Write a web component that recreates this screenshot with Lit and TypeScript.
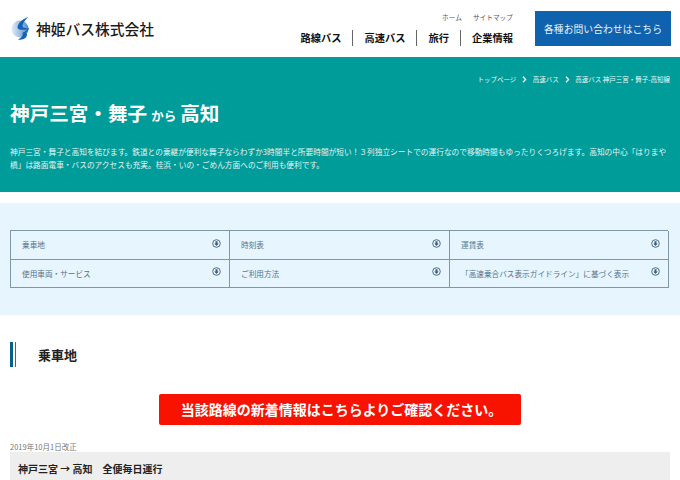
import { LitElement, html, css, svg } from "lit";
import { customElement } from "lit/decorators.js";

const items = [
  "乗車地", "時刻表", "運賃表",
  "使用車両・サービス", "ご利用方法", "「高速乗合バス表示ガイドライン」に基づく表示",
];

const downIcon = html`<svg class="ico" viewBox="0 0 9 9" width="9" height="9">
  <circle cx="4.5" cy="4.5" r="3.8" fill="none" stroke="#3d5f78" stroke-width="0.9"></circle>
  <path d="M3.5 2.2h2v2.2h1.2L4.5 6.9 2.3 4.4h1.2z" fill="#3d5f78"></path>
</svg>`;

const logo = svg`
  <defs>
    <linearGradient id="lg" x1="0" x2="1" y1="0" y2="0">
      <stop offset="0" stop-color="#e3ecf6"></stop>
      <stop offset="0.6" stop-color="#8fb4de"></stop>
      <stop offset="1" stop-color="#4f8ccc"></stop>
    </linearGradient>
  </defs>
  <circle cx="9" cy="13" r="8.500" fill="url(#lg)"></circle>
  <path d="M17.500 1 C12 2.500 7 7 6.500 11 C6.500 14 11 14.500 17 13.200 C14.500 15.500 12 16 11.500 17 C12.500 19 11 21.500 7 23.500 C12 24.500 16 22 16 18.500 C16 17.500 15.500 17 15 16.500 C16.500 15.500 17.500 14 18 12 C15 12.500 12 12 11.500 10.500 C11.500 7 14.500 3.500 17.500 1 Z" fill="#1464b4"></path>
`;

@customElement("app-root")
export class AppRoot extends LitElement {
  static styles = css`
    :host {
      display: block;
      width: 680px;
      height: 480px;
      overflow: hidden;
      background: #fff;
      font-family: "Noto Sans CJK JP", "Noto Sans", sans-serif;
      color: #222;
    }
    header {
      height: 57px;
      display: flex;
      justify-content: space-between;
      padding: 0 9px 0 11px;
      box-sizing: border-box;
    }
    .brand {
      display: flex;
      align-items: center;
      gap: 6px;
      height: 57px;
      font-size: 14.750px;
      font-weight: 500;
      color: #1c1c1c;
      white-space: nowrap;
    }
    .right { display: flex; gap: 22px; }
    .navs { display: flex; flex-direction: column; align-items: flex-end; padding-top: 12px; }
    .sub { display: flex; gap: 11px; font-size: 6.700px; line-height: 11px; color: #555; }
    .main { display: flex; margin-top: 7px; align-items: center; }
    .main span {
      font-size: 10.250px;
      font-weight: 700;
      line-height: 16px;
      color: #111;
      padding: 0 11px;
      border-left: 1px solid #666;
    }
    .main span:first-child { border-left: 0; }
    .main span:last-child { padding-right: 0; }
    .contact {
      margin-top: 11px;
      width: 136px;
      height: 35px;
      background: #0f63ae;
      color: #e8f1f8;
      font-size: 9.830px;
      display: flex;
      align-items: center;
      justify-content: center;
      white-space: nowrap;
    }
    .hero {
      height: 135px;
      background: #009c99;
      color: #fff;
      padding: 17px 10px 0;
      box-sizing: border-box;
    }
    .crumbs {
      display: flex;
      justify-content: flex-end;
      align-items: center;
      gap: 5.750px;
      font-size: 6.500px;
      line-height: 10px;
      white-space: nowrap;
      color: #eaf7f6;
    }
    .crumbs svg { display: block; }
    h1 {
      margin: 16px 0 0;
      font-size: 19.600px;
      line-height: 26px;
      font-weight: 700;
      display: flex;
      align-items: baseline;
      gap: 4px;
    }
    h1 small { font-size: 12.500px; font-weight: 700; }
    .desc {
      margin: 16px 0 0;
      font-size: 7.700px;
      line-height: 13px;
      color: #e4f4f3;
    }
    .band {
      margin-top: 11px;
      height: 112px;
      background: #e7f5fe;
      padding: 27px 10px 0;
      box-sizing: border-box;
    }
    .table {
      width: 658px;
      display: grid;
      grid-template-columns: 219px 220px 219px;
      border-top: 1px solid #7f97a8;
      border-left: 1px solid #7f97a8;
      box-sizing: border-box;
    }
    .cell {
      height: 28.500px;
      box-sizing: border-box;
      border-right: 1px solid #7f97a8;
      border-bottom: 1px solid #7f97a8;
      padding: 0 8px 0 11px;
      display: flex;
      justify-content: space-between;
      font-size: 7.650px;
      line-height: 27px;
      color: #55718a;
      white-space: nowrap;
    }
    .ico { margin-top: 7.500px; flex: none; }
    .body { padding: 0 10px; }
    h2 {
      margin: 27px 0 0;
      height: 25px;
      border-left: 3px solid #0b5f8f;
      position: relative;
      padding-left: 25px;
      font-size: 13px;
      line-height: 25px;
      font-weight: 700;
      color: #222;
    }
    h2::before {
      content: "";
      position: absolute;
      left: 2px;
      top: 0;
      bottom: 0;
      width: 1px;
      background: #2a6f96;
    }
    .alert {
      display: flex;
      align-items: center;
      justify-content: center;
      width: 362px;
      height: 31px;
      margin: 27px auto 0;
      padding: 0 0 1px 3px;
      box-sizing: border-box;
      background: #f81200;
      border-radius: 2px;
      color: #fff;
      font-size: 14px;
      font-weight: 700;
      white-space: nowrap;
    }
    .date {
      margin-top: 16px;
      font-size: 7.500px;
      line-height: 11px;
      color: #777;
    }
    .route {
      background: #eeeeee;
      width: 660px;
      height: 40px;
      padding: 0 8px;
      box-sizing: border-box;
      font-size: 10px;
      font-weight: 700;
      line-height: 33px;
      color: #222;
      white-space: pre;
    }
  `;

  render() {
    const chev = html`<svg width="5" height="7" viewBox="0 0 5 7"><path d="M1 .8 3.600 3.500 1 6.200" fill="none" stroke="#fff" stroke-width="1.300"></path></svg>`;
    return html`
      <header>
        <div class="brand">
          <svg width="19" height="25" viewBox="0 0 19 25">${logo}</svg>
          <span>神姫バス株式会社</span>
        </div>
        <div class="right">
          <div class="navs">
            <div class="sub"><span>ホーム</span><span>サイトマップ</span></div>
            <div class="main"><span>路線バス</span><span>高速バス</span><span>旅行</span><span>企業情報</span></div>
          </div>
          <div class="contact">各種お問い合わせはこちら</div>
        </div>
      </header>
      <section class="hero">
        <div class="crumbs">
          <span>トップページ</span>${chev}<span>高速バス</span>${chev}<span>高速バス 神戸三宮・舞子-高知線</span>
        </div>
        <h1><span>神戸三宮・舞子</span><small>から</small><span>高知</span></h1>
        <p class="desc">神戸三宮・舞子と高知を結びます。鉄道との乗継が便利な舞子ならわずか3時間半と所要時間が短い！３列独立シートでの運行なので移動時間もゆったりくつろげます。高知の中心「はりまや橋」は路面電車・バスのアクセスも充実。桂浜・いの・ごめん方面へのご利用も便利です。</p>
      </section>
      <section class="band">
        <div class="table">
          ${items.map((t) => html`<div class="cell"><span>${t}</span>${downIcon}</div>`)}
        </div>
      </section>
      <section class="body">
        <h2>乗車地</h2>
        <div class="alert">当該路線の新着情報はこちらよりご確認ください。</div>
        <div class="date">2019年10月1日改正</div>
        <div class="route">神戸三宮 → 高知　全便毎日運行</div>
      </section>
    `;
  }
}
